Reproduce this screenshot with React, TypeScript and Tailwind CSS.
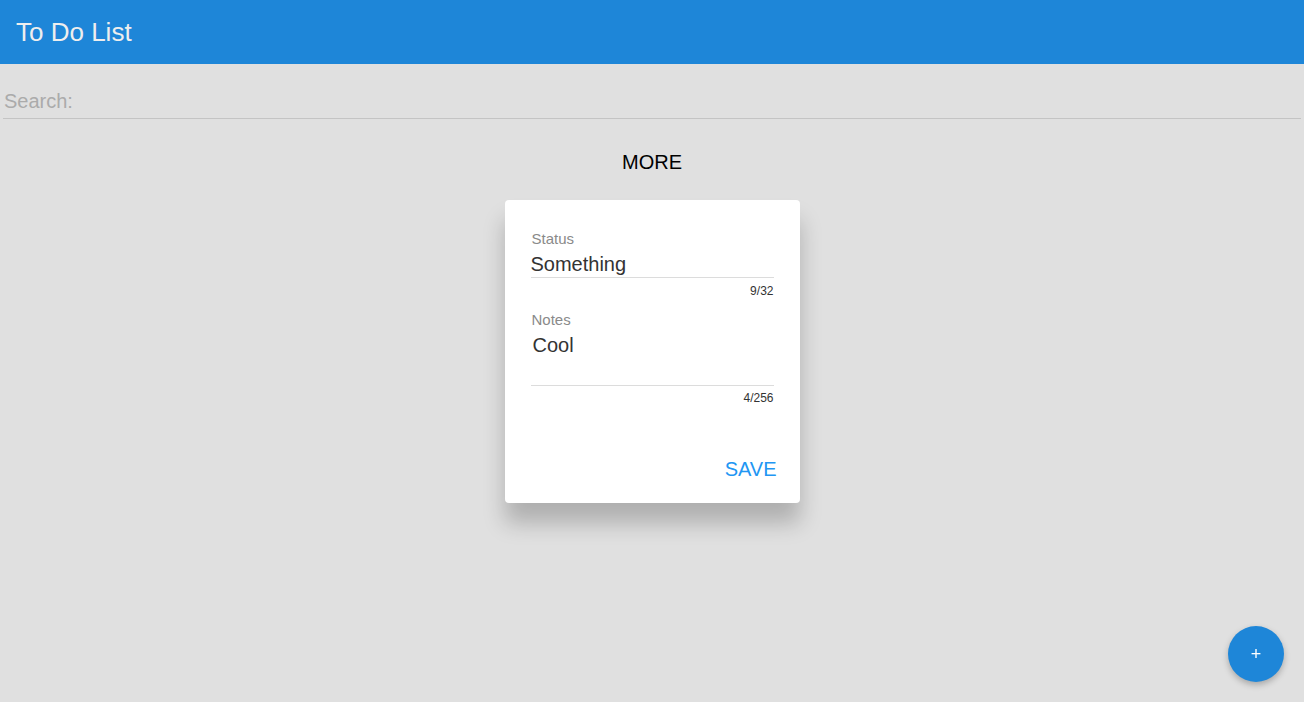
import React, { useState } from 'react';

const font = "font-['Liberation_Sans',Arial,sans-serif]";

const Field: React.FC<{ label: string; value: string; max: number; multiline?: boolean }> = ({ label, value, max, multiline }) => (
  <div>
    <div className="text-[15px] leading-[18px] text-[#8a8a8a] pl-[1px]">{label}</div>
    <div
      className={`border-b border-[#dcdcdc] text-[20px] text-[#333] ${multiline ? 'mt-[4px] h-[53px] leading-[24px] pl-[2px]' : 'mt-[4px] h-[26px] leading-[25px]'}`}
    >
      {value}
    </div>
    <div className={`${multiline ? 'mt-[5px]' : 'mt-[6px]'} text-right text-[12px] leading-[14px] text-[#333]`}>
      {value.length}/{max}
    </div>
  </div>
);

export default function App() {
  const [search, setSearch] = useState('');

  return (
    <div className={`${font} min-h-[702px] bg-[#e0e0e0] flex flex-col`}>
      {/* HEADER */}
      <header className="h-16 bg-[#1e86d8] flex items-center px-4 shrink-0">
        <h1 className="text-[26px] text-[#eeeeee] leading-none">To Do List</h1>
      </header>

      {/* SEARCH */}
      <div className="mx-[3px] mt-[25px] border-b border-[#c4c4c4]">
        <input
          type="text"
          value={search}
          onChange={(e) => setSearch(e.target.value)}
          placeholder="Search:"
          className="w-full h-[29px] bg-transparent outline-none text-[20px] leading-[24px] pl-[1px] pb-[4px] text-[#333] placeholder:text-[#ababab]"
        />
      </div>

      <div className="mt-[31px] text-center text-[20px] leading-[24px] text-black">MORE</div>

      {/* CARD */}
      <div className="mt-[26px] self-center w-[295px] bg-white rounded-[4px] shadow-[0_20px_22px_rgba(0,0,0,0.22)]">
        <div className="pt-[30px] px-[26px]">
          <Field label="Status" value="Something" max={32} />
          <div className="mt-[13px]">
            <Field label="Notes" value="Cool" max={256} multiline />
          </div>
        </div>
        <div className="flex justify-end pr-[23px] mt-[53px] pb-[23px]">
          <button className="text-[20px] leading-[22px] text-[#2196f3]">SAVE</button>
        </div>
      </div>

      {/* FAB */}
      <button className="fixed right-5 bottom-5 w-14 h-14 rounded-full bg-[#1e86d8] text-white text-[18px] leading-none flex items-center justify-center shadow-[0_3px_6px_rgba(0,0,0,0.25)]">
        +
      </button>
    </div>
  );
}
